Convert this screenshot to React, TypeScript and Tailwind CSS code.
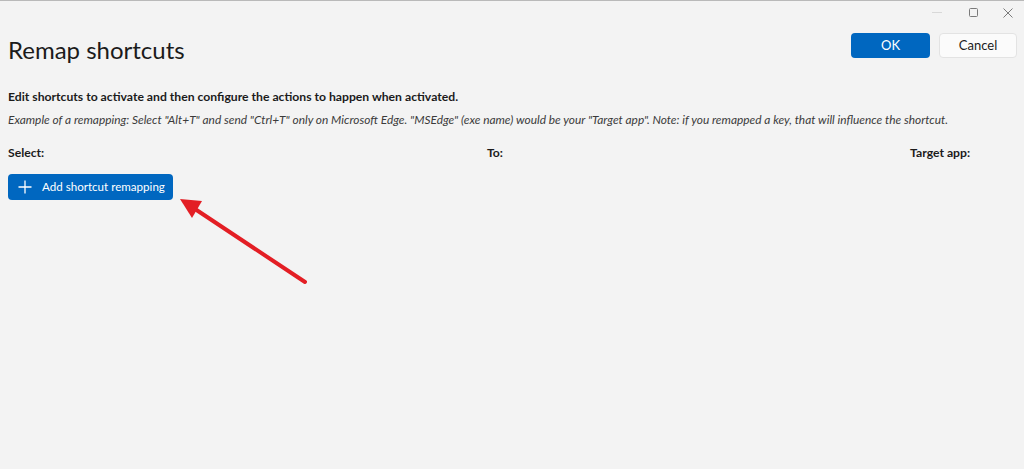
import React from "react";

export default function App() {
  const font = { fontFamily: 'Lato, "Noto Sans", sans-serif' };
  return (
    <div
      className="relative w-[1024px] h-[469px] overflow-hidden bg-[#f3f3f3] text-[#1b1b1b]"
      style={font}
    >
      <div className="h-px w-full bg-[#b9b9b9]" />
      {/* title bar controls */}
      <div className="flex justify-end items-center h-[23px] pr-[10px] gap-[22px] text-[#8a8a8a]">
        <div className="w-[10px] h-px bg-[#d8d8d8]" />
        <svg width="12" height="12" viewBox="0 0 12 12" className="ml-[4px]">
          <rect x="1.5" y="1.5" width="8" height="8" rx="1" fill="none" stroke="#7a7a7a" strokeWidth="1" />
        </svg>
        <svg width="12" height="12" viewBox="0 0 12 12">
          <path d="M1.5 1.5 L10.5 10.5 M10.5 1.5 L1.5 10.5" stroke="#7a7a7a" strokeWidth="1" />
        </svg>
      </div>
      {/* header row */}
      <div className="flex items-start justify-between pl-[8px] pr-[7px]">
        <h1 className="text-[24px] leading-[32px] mt-[10px] font-normal text-[#1b1b1b]">Remap shortcuts</h1>
        <div className="flex gap-[9px] mt-[9px]">
          <button className="w-[79px] h-[25px] rounded-[4px] bg-[#0067c0] text-white text-[13px] leading-none">OK</button>
          <button className="w-[78px] h-[25px] rounded-[4px] bg-[#fbfbfb] border border-[#e3e3e3] text-[#1b1b1b] text-[13px] leading-none">Cancel</button>
        </div>
      </div>
      <div className="pl-[8px] pr-[7px]">
        <p className="mt-[22px] text-[12.2px] leading-[18px] font-bold">
          Edit shortcuts to activate and then configure the actions to happen when activated.
        </p>
        <p className="mt-[5px] text-[11.9px] leading-[18px] italic text-[#3b3b3b] whitespace-nowrap">
          Example of a remapping: Select "Alt+T" and send "Ctrl+T" only on Microsoft Edge. "MSEdge" (exe name) would be your "Target app". Note: if you remapped a key, that will influence the shortcut.
        </p>
        <div className="mt-[15px] flex text-[12.2px] leading-[18px] font-bold">
          <div className="w-[479px]">Select:</div>
          <div className="flex-1">To:</div>
          <div className="w-[107px]">Target app:</div>
        </div>
        <button className="mt-[12px] flex items-center w-[165px] h-[26px] rounded-[4px] bg-[#0067c0] text-white text-[11.6px] leading-none whitespace-nowrap">
          <svg width="16" height="16" viewBox="0 0 16 16" className="ml-[9px] shrink-0">
            <path d="M8 1.5 V14.5 M1.5 8 H14.5" stroke="white" strokeWidth="1.3" />
          </svg>
          <span className="ml-[9px]">Add shortcut remapping</span>
        </button>
      </div>
      {/* red annotation arrow */}
      <svg className="absolute left-0 top-0 pointer-events-none" width="1024" height="469" viewBox="0 0 1024 469">
        <line x1="305" y1="282" x2="192" y2="207" stroke="#e31e24" strokeWidth="4" strokeLinecap="round" />
        <polygon points="180,199 202,201 192,218" fill="#e31e24" />
      </svg>
    </div>
  );
}
